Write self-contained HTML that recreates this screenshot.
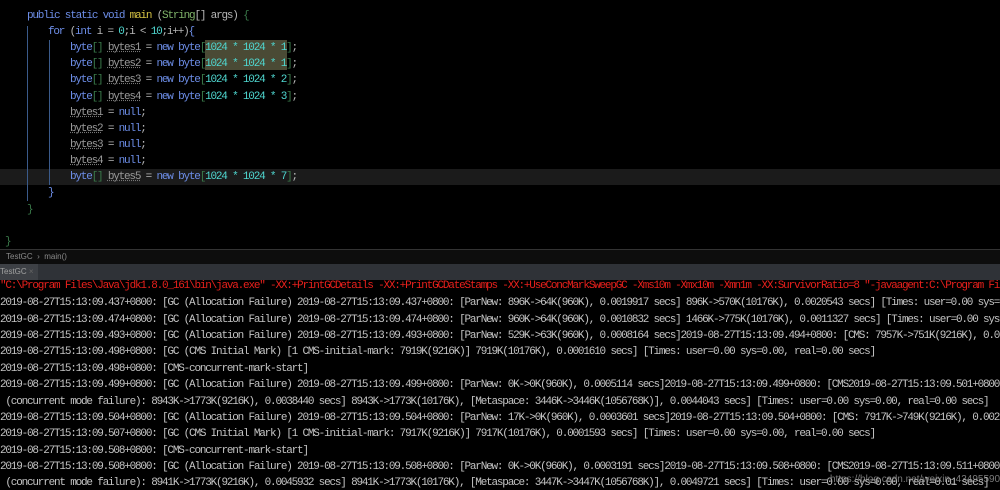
<!DOCTYPE html>
<html><head><meta charset="utf-8"><style>
*{margin:0;padding:0;box-sizing:border-box}
body{width:1000px;height:489px;background:#000;overflow:hidden;position:relative;font-family:"Liberation Mono",monospace;}
.l{position:absolute;white-space:pre;font-size:11px;letter-spacing:-1.2px;line-height:14px;}
.k{color:#6d8ee8}.n{color:#b7b7b7}.g{color:#7fb36a}.y{color:#d7c445}.num{color:#4fd7d0}.u{color:#9a9a9a;text-decoration:underline dotted #777}.br{color:#3a7a4a}.nu{color:#6d8ee8}
.c{color:#c4c4c4}
.hl{position:absolute;left:0;width:1000px;top:169px;height:16px;background:#1b1b1b}
.guide{position:absolute;width:1px;background:#3a5a8a}
</style></head><body>
<div class="hl"></div>
<div style="position:absolute;left:205px;top:40px;width:82px;height:30px;background:#4a4a35"></div>
<div class="guide" style="left:27px;top:26px;height:175px"></div>
<div class="guide" style="left:49px;top:40px;height:145px"></div>
<div class="l" style="left:27px;top:9px"><span class="k">public static void </span><span class="y">main</span><span class="n"> (</span><span class="g">String</span><span class="n">[] args) </span><span class="br">{</span></div>
<div class="l" style="left:48px;top:25px"><span class="k">for</span><span class="n"> (</span><span class="k">int</span><span class="n"> i = </span><span class="num">0</span><span class="n">;i &lt; </span><span class="num">10</span><span class="n">;i++)</span><span class="k">{</span></div>
<div class="l" style="left:70px;top:41px"><span class="k">byte</span><span class="br">[]</span><span class="n"> </span><span class="u">bytes1</span><span class="n"> = </span><span class="k">new byte</span><span class="br">[</span><span class="num">1024 * 1024 * 1</span><span class="br">]</span><span class="n">;</span></div>
<div class="l" style="left:70px;top:57px"><span class="k">byte</span><span class="br">[]</span><span class="n"> </span><span class="u">bytes2</span><span class="n"> = </span><span class="k">new byte</span><span class="br">[</span><span class="num">1024 * 1024 * 1</span><span class="br">]</span><span class="n">;</span></div>
<div class="l" style="left:70px;top:73px"><span class="k">byte</span><span class="br">[]</span><span class="n"> </span><span class="u">bytes3</span><span class="n"> = </span><span class="k">new byte</span><span class="br">[</span><span class="num">1024 * 1024 * 2</span><span class="br">]</span><span class="n">;</span></div>
<div class="l" style="left:70px;top:90px"><span class="k">byte</span><span class="br">[]</span><span class="n"> </span><span class="u">bytes4</span><span class="n"> = </span><span class="k">new byte</span><span class="br">[</span><span class="num">1024 * 1024 * 3</span><span class="br">]</span><span class="n">;</span></div>
<div class="l" style="left:70px;top:106px"><span class="u">bytes1</span><span class="n"> = </span><span class="nu">null</span><span class="n">;</span></div>
<div class="l" style="left:70px;top:122px"><span class="u">bytes2</span><span class="n"> = </span><span class="nu">null</span><span class="n">;</span></div>
<div class="l" style="left:70px;top:138px"><span class="u">bytes3</span><span class="n"> = </span><span class="nu">null</span><span class="n">;</span></div>
<div class="l" style="left:70px;top:154px"><span class="u">bytes4</span><span class="n"> = </span><span class="nu">null</span><span class="n">;</span></div>
<div class="l" style="left:70px;top:170px"><span class="k">byte</span><span class="br">[]</span><span class="n"> </span><span class="u">bytes5</span><span class="n"> = </span><span class="k">new byte</span><span class="br">[</span><span class="num">1024 * 1024 * 7</span><span class="br">]</span><span class="n">;</span></div>
<div class="l" style="left:48px;top:186px"><span class="k">}</span></div>
<div class="l" style="left:27px;top:203px"><span class="br">}</span></div>
<div class="l" style="left:5px;top:235px"><span class="br">}</span></div>
<div style="position:absolute;left:0;top:249px;width:1000px;height:1px;background:#333"></div>
<div style="position:absolute;left:0;top:250px;width:1000px;height:14px;background:#0d0d0d;font-family:'Liberation Sans',sans-serif;font-size:8px;color:#8a8a8a;line-height:14px;padding-left:6px">TestGC &nbsp;›&nbsp; main()</div>
<div style="position:absolute;left:0;top:264px;width:1000px;height:16px;background:#2f3237"></div>
<div style="position:absolute;left:0;top:264px;width:38px;height:16px;background:#3d4045;font-family:'Liberation Sans',sans-serif;font-size:8px;color:#a0a0a0;line-height:16px;">TestGC <span style="color:#666">×</span></div>
<div class="l" style="left:0;top:279px;color:#e8201c">"C:\Program Files\Java\jdk1.8.0_161\bin\java.exe" -XX:+PrintGCDetails -XX:+PrintGCDateStamps -XX:+UseConcMarkSweepGC -Xms10m -Xmx10m -Xmn1m -XX:SurvivorRatio=8 "-javaagent:C:\Program Fi</div>
<div class="l c" style="left:0;top:296px">2019-08-27T15:13:09.437+0800: [GC (Allocation Failure) 2019-08-27T15:13:09.437+0800: [ParNew: 896K-&gt;64K(960K), 0.0019917 secs] 896K-&gt;570K(10176K), 0.0020543 secs] [Times: user=0.00 sys=0.00</div>
<div class="l c" style="left:0;top:313px">2019-08-27T15:13:09.474+0800: [GC (Allocation Failure) 2019-08-27T15:13:09.474+0800: [ParNew: 960K-&gt;64K(960K), 0.0010832 secs] 1466K-&gt;775K(10176K), 0.0011327 secs] [Times: user=0.00 sys=0.00</div>
<div class="l c" style="left:0;top:329px">2019-08-27T15:13:09.493+0800: [GC (Allocation Failure) 2019-08-27T15:13:09.493+0800: [ParNew: 529K-&gt;63K(960K), 0.0008164 secs]2019-08-27T15:13:09.494+0800: [CMS: 7957K-&gt;751K(9216K), 0.0</div>
<div class="l c" style="left:0;top:345px">2019-08-27T15:13:09.498+0800: [GC (CMS Initial Mark) [1 CMS-initial-mark: 7919K(9216K)] 7919K(10176K), 0.0001610 secs] [Times: user=0.00 sys=0.00, real=0.00 secs]</div>
<div class="l c" style="left:0;top:362px">2019-08-27T15:13:09.498+0800: [CMS-concurrent-mark-start]</div>
<div class="l c" style="left:0;top:378px">2019-08-27T15:13:09.499+0800: [GC (Allocation Failure) 2019-08-27T15:13:09.499+0800: [ParNew: 0K-&gt;0K(960K), 0.0005114 secs]2019-08-27T15:13:09.499+0800: [CMS2019-08-27T15:13:09.501+0800</div>
<div class="l c" style="left:0;top:395px"> (concurrent mode failure): 8943K-&gt;1773K(9216K), 0.0038440 secs] 8943K-&gt;1773K(10176K), [Metaspace: 3446K-&gt;3446K(1056768K)], 0.0044043 secs] [Times: user=0.00 sys=0.00, real=0.00 secs]</div>
<div class="l c" style="left:0;top:411px">2019-08-27T15:13:09.504+0800: [GC (Allocation Failure) 2019-08-27T15:13:09.504+0800: [ParNew: 17K-&gt;0K(960K), 0.0003601 secs]2019-08-27T15:13:09.504+0800: [CMS: 7917K-&gt;749K(9216K), 0.002</div>
<div class="l c" style="left:0;top:427px">2019-08-27T15:13:09.507+0800: [GC (CMS Initial Mark) [1 CMS-initial-mark: 7917K(9216K)] 7917K(10176K), 0.0001593 secs] [Times: user=0.00 sys=0.00, real=0.00 secs]</div>
<div class="l c" style="left:0;top:444px">2019-08-27T15:13:09.508+0800: [CMS-concurrent-mark-start]</div>
<div class="l c" style="left:0;top:460px">2019-08-27T15:13:09.508+0800: [GC (Allocation Failure) 2019-08-27T15:13:09.508+0800: [ParNew: 0K-&gt;0K(960K), 0.0003191 secs]2019-08-27T15:13:09.508+0800: [CMS2019-08-27T15:13:09.511+0800</div>
<div class="l c" style="left:0;top:476px"> (concurrent mode failure): 8941K-&gt;1773K(9216K), 0.0045932 secs] 8941K-&gt;1773K(10176K), [Metaspace: 3447K-&gt;3447K(1056768K)], 0.0049721 secs] [Times: user=0.00 sys=0.00, real=0.01 secs]</div>
<div style="position:absolute;left:830px;top:474px;font-family:'Liberation Sans',sans-serif;font-size:10px;color:#9a9a9a;opacity:.8">https://blog.csdn.net/weixin_43495590</div>
</body></html>
